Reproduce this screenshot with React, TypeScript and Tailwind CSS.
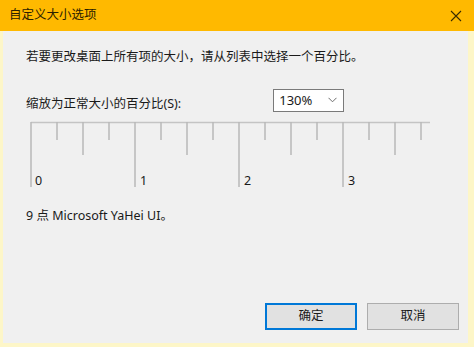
import React from 'react';

const font = { fontFamily: '"Noto Sans", "Noto Sans CJK SC", sans-serif' };

function Ruler() {
  // 刻度：每 1/4 一格，26px
  const ticks = Array.from({ length: 16 }, (_, i) => i);
  return (
    <svg width="410" height="72" className="block">
      <line x1="1" y1="1.5" x2="400" y2="1.5" stroke="#c4c4c4" strokeWidth="1.5" />
      {ticks.map((i) => {
        const x = 1 + i * 26;
        const len = i % 4 === 0 ? 66 : i % 2 === 0 ? 34 : 19;
        return <line key={i} x1={x} y1="1" x2={x} y2={len} stroke="#b9b9b9" strokeWidth="1.5" />;
      })}
    </svg>
  );
}

export default function App() {
  return (
    <div className="w-[474px] h-[347px] bg-[#fdf6c8] flex flex-col text-[#1a1a1a]" style={font}>
      {/* Barra de título */}
      <div className="h-[31px] bg-[#ffb900] flex items-center justify-between pl-[9px] pr-[12px]">
        <span className="text-[12.5px] text-[#2b2100]">自定义大小选项</span>
        <svg width="12" height="12" viewBox="0 0 12 12">
          <path d="M1 1 L11 11 M11 1 L1 11" stroke="#3a2c00" strokeWidth="1.1" />
        </svg>
      </div>

      <div className="flex-1 ml-[3px] mr-[6px] mb-[4px] bg-[#f0f0f0] flex flex-col pl-[23px]">
        <div className="mt-[17px] text-[12.5px] leading-[18px]">若要更改桌面上所有项的大小，请从列表中选择一个百分比。</div>

        <div className="mt-[21px] flex items-center">
          <span className="text-[12.5px] leading-[18px] mt-[8px]">缩放为正常大小的百分比(S):</span>
          <div className="ml-[92px] w-[71px] h-[23px] bg-white border border-[#7a7a7a] flex items-center justify-between pl-[5px] pr-[6px]">
            <span className="text-[13px] leading-none">130%</span>
            <svg width="9" height="6" viewBox="0 0 9 6">
              <path d="M0.5 0.8 L4.5 4.8 L8.5 0.8" fill="none" stroke="#6d6d6d" strokeWidth="1" />
            </svg>
          </div>
        </div>

        <div className="relative mt-[8px] ml-[4px]">
          <Ruler />
          <span className="absolute left-[5px] top-[54px] text-[12.5px] leading-none">0</span>
          <span className="absolute left-[110px] top-[54px] text-[12.5px] leading-none">1</span>
          <span className="absolute left-[214px] top-[54px] text-[12.5px] leading-none">2</span>
          <span className="absolute left-[318px] top-[54px] text-[12.5px] leading-none">3</span>
        </div>

        <div className="mt-[14px] text-[12.5px] leading-[18px]">9 点 Microsoft YaHei UI。</div>

        <div className="mt-auto mb-[13px] flex justify-end gap-[10px] pr-[9px]">
          <button className="w-[92px] h-[27px] bg-[#e1e1e1] border-2 border-[#0078d7] text-[12.5px]">确定</button>
          <button className="w-[92px] h-[27px] bg-[#e1e1e1] border border-[#adadad] text-[12.5px]">取消</button>
        </div>
      </div>
    </div>
  );
}
